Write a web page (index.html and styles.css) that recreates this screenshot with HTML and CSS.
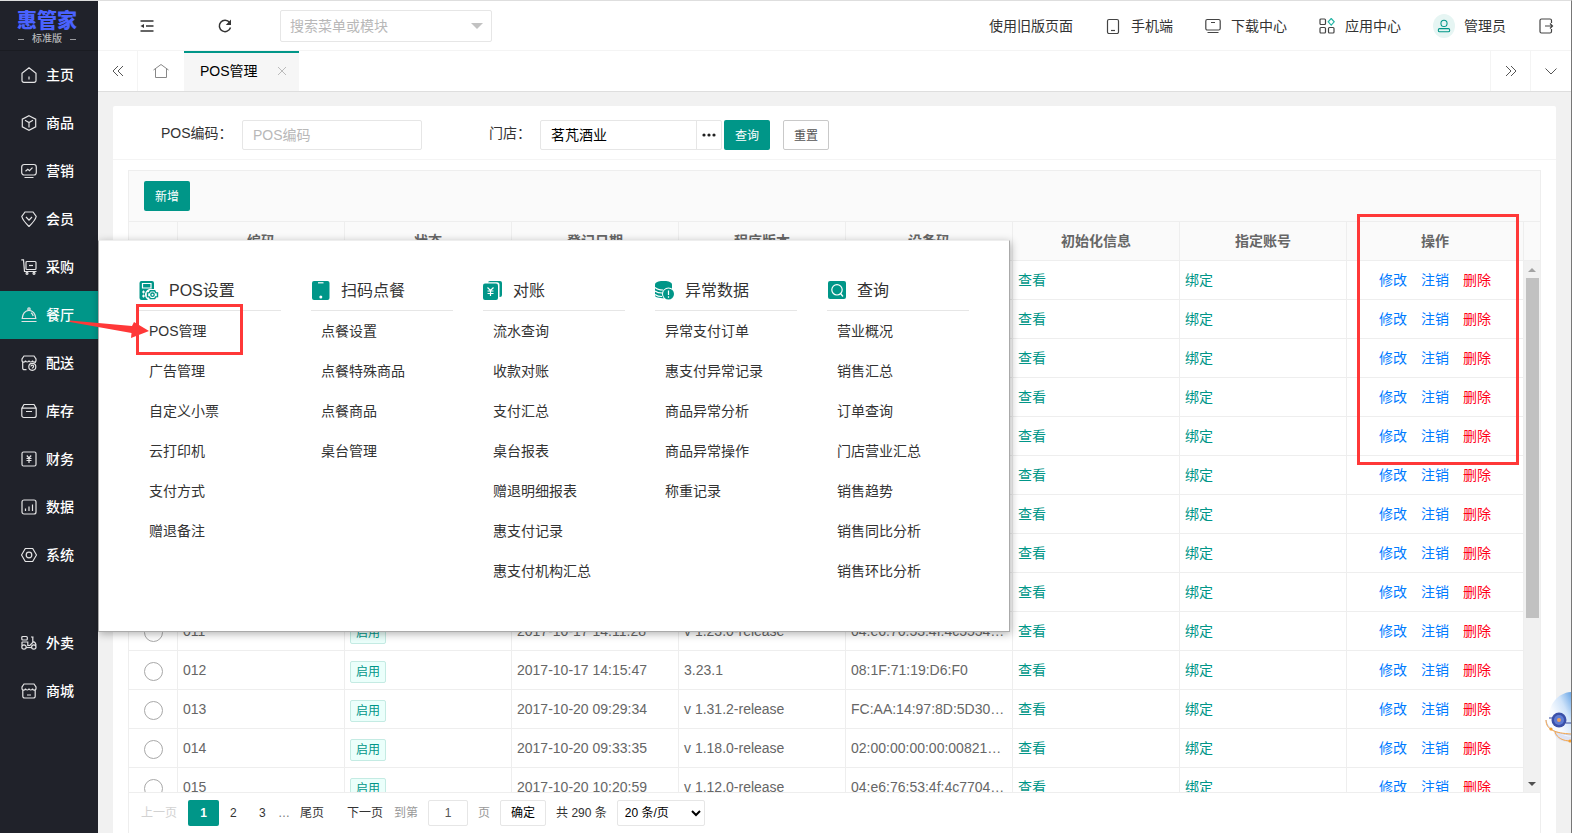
FILE: index.html
```html
<!DOCTYPE html>
<html lang="zh-CN">
<head>
<meta charset="utf-8">
<title>POS管理</title>
<link rel="stylesheet" href="styles.css">
</head>
<body>
<div class="app">
  <aside class="sidebar">
    <div class="logo">
      <div class="logo-name">惠管家</div>
      <div class="logo-edition"><i></i><span>标准版</span><i></i></div>
    </div>
    <nav class="nav">
      <a class="nav-item" href="#"><svg viewBox="0 0 16 16"><path d="M1 6.200 8 .8l7 5.400v7.300a1.800 1.800 0 0 1-1.800 1.800H2.800A1.800 1.800 0 0 1 1 13.500z"/><path d="M8 9.500v3"/></svg>主页</a>
      <a class="nav-item" href="#"><svg viewBox="0 0 16 16"><path d="M8 .7l6.700 3.400v7.800L8 15.300l-6.700-3.400V4.100zM4 5.300l4 2.200 4-2.200M8 7.500v5"/></svg>商品</a>
      <a class="nav-item" href="#"><svg viewBox="0 0 16 16"><rect x=".7" y="1.500" width="14.600" height="10.500" rx="2.500"/><path d="M4.500 8.300l2.300-2 1.700 1.400 3-3M3.500 14.500h9"/></svg>营销</a>
      <a class="nav-item" href="#"><svg viewBox="0 0 16 16"><path d="M4 1h8l3.200 4.500C14.500 9 11 12.500 8 15.500 5 12.500 1.500 9 .8 5.500zM5 6l3 3.200L11 6"/></svg>会员</a>
      <a class="nav-item" href="#"><svg viewBox="0 0 16 16"><path d="M.3.800h2.200l1 11.700h12"/><rect x="5" y="2.500" width="10" height="8" rx="1"/><path d="M8 6.500h4"/><circle cx="6" cy="14.300" r="1"/><circle cx="13" cy="14.300" r="1"/></svg>采购</a>
      <a class="nav-item active" href="#"><svg viewBox="0 0 16 16"><path d="M1.200 11.500C1.500 7 4.200 3.300 8 3.300s6.500 3.700 6.800 8.200zM.5 14.500h15M10 5.800c1.200.8 1.900 1.800 2.200 3.200"/><circle cx="8" cy="2" r="1.200"/></svg>餐厅<svg class="arrow" viewBox="0 0 80 18"><path d="M0 .5 62 6 64 2 79 11 61 18 61.500 13 0 2z"/></svg></a>
      <a class="nav-item" href="#"><svg viewBox="0 0 16 16"><path d="M5.500 14.700H3.200a1.500 1.500 0 0 1-1.500-1.500V7M14.300 7v1M3 1h10l2 3v1.500c0 2.200-3.400 2.200-3.500 0-.2 2-3.300 2-3.500 0-.2 2-3.300 2-3.500 0C4.400 7.700 1 7.700 1 5.500V4z"/><circle cx="11.300" cy="11.800" r="3.500"/><path d="M10 11.500c0-1.800 2.600-1.800 2.600 0 0 1-1.300 1-1.300 2"/></svg>配送</a>
      <a class="nav-item" href="#"><svg viewBox="0 0 16 16"><path d="M.8 5.200 3 1.500h10l2.200 3.700v7.300a2 2 0 0 1-2 2H2.800a2 2 0 0 1-2-2zM.8 5.200h14.400M5 8.500h6"/></svg>库存</a>
      <a class="nav-item" href="#"><svg viewBox="0 0 16 16"><rect x="1" y="1" width="14" height="14" rx="1.500"/><path d="M5.800 4.500 8 7l2.200-2.500M8 7v5M5.500 7.500h5M5.500 9.500h5"/></svg>财务</a>
      <a class="nav-item" href="#"><svg viewBox="0 0 16 16"><rect x="1" y="1" width="14" height="14" rx="2"/><path d="M4.500 9.500V12M8 7.500V12M11.500 5.500V12"/></svg>数据</a>
      <a class="nav-item" href="#"><svg viewBox="0 0 16 16"><path d="M4.300 1.500h7.400L15.500 8l-3.800 6.500H4.300L.5 8z"/><circle cx="8" cy="8" r="2.800"/></svg>系统</a>
      <a class="nav-item extra" href="#"><svg viewBox="0 0 16 16"><rect x=".8" y="1.500" width="5.500" height="3.500" rx="1"/><path d="M.8 7h6v3.500h2l3-3V2.500M10 2h2.500M12 6.500c2 .5 3 2 3 4M1 10.500V7"/><circle cx="3" cy="12" r="2.200"/><circle cx="12.800" cy="12" r="2.200"/><path d="M5.200 12.500h5.400"/></svg>外卖</a>
      <a class="nav-item" href="#"><svg viewBox="0 0 16 16"><path d="M1.800 7v6.200a1.800 1.800 0 0 0 1.800 1.800h8.800a1.800 1.800 0 0 0 1.800-1.800V7M3 1h10l2 3v1.500c0 2.200-3.400 2.200-3.500 0-.2 2-3.300 2-3.500 0-.2 2-3.300 2-3.500 0C4.400 7.700 1 7.700 1 5.500V4zM6 12h4"/></svg>商城</a>
    </nav>
  </aside>

  <div class="main">
    <header class="topbar">
      <button class="icon-btn" type="button" aria-label="收起菜单"><svg viewBox="0 0 16 16"><path d="M1.500 3h13M7 8h7.500M1.500 13h13"/><path class="solid" d="M1.500 8 5 6v4z"/></svg></button>
      <button class="icon-btn" type="button" aria-label="刷新"><svg viewBox="0 0 16 16"><path d="M13.500 9.500A5.700 5.700 0 1 1 12.600 4.500"/><path class="solid" d="M14 1.500V7H8.800z"/></svg></button>
      <div class="search"><input type="text" aria-label="搜索" placeholder="搜索菜单或模块"><i class="caret"></i></div>
      <div class="tools">
        <a href="#">使用旧版页面</a>
        <a href="#"><svg viewBox="0 0 16 16"><rect x="2.500" y="1.500" width="11" height="14" rx="1.500"/><path d="M6 12.500h4"/></svg>手机端</a>
        <a href="#"><svg viewBox="0 0 16 16"><rect x=".8" y="1.500" width="14.400" height="10.500" rx="1.500"/><path d="M6 4.500h4M2.500 14.500h11"/></svg>下载中心</a>
        <a href="#"><svg viewBox="0 0 16 16"><rect x="1" y="1" width="5.500" height="5.500" rx="1"/><rect x="1" y="9.500" width="5.500" height="5.500" rx="1"/><rect x="9.500" y="9.500" width="5.500" height="5.500" rx="1"/><path class="teal" d="M12.200.500l3 3.300-3 3.300-3-3.300z"/></svg>应用中心</a>
        <a class="user" href="#"><span class="avatar"><svg viewBox="0 0 16 16"><circle cx="8" cy="5" r="3.500"/><rect x="1.500" y="11" width="13" height="3.500" rx="1.500"/></svg></span>管理员</a>
        <a href="#" aria-label="退出"><svg viewBox="0 0 16 16"><path d="M13.500 5V2.500A1.500 1.500 0 0 0 12 1H3.500A1.500 1.500 0 0 0 2 2.500v11A1.500 1.500 0 0 0 3.500 15H12a1.500 1.500 0 0 0 1.500-1.500V11M7 8h7M12 5.500 14.500 8 12 10.500"/></svg></a>
      </div>
    </header>

    <div class="tabs">
      <button class="tab-btn" type="button" aria-label="向左"><svg viewBox="0 0 16 16"><path d="M8 3 3 8l5 5M13 3 8 8l5 5"/></svg></button>
      <button class="tab-btn home" type="button" aria-label="首页"><svg viewBox="0 0 16 16"><path d="M.5 7 8 1.500 15.500 7M2.500 6v8.500h11V6"/></svg></button>
      <div class="tab"><span>POS管理</span><button type="button" aria-label="关闭"><svg viewBox="0 0 8 8"><path d="M0 0l8 8M8 0 0 8"/></svg></button></div>
      <button class="tab-btn last" type="button" aria-label="向右"><svg viewBox="0 0 16 16"><path d="M3 3l5 5-5 5M8 3l5 5-5 5"/></svg></button>
      <button class="tab-btn" type="button" aria-label="更多"><svg viewBox="0 0 16 16"><path d="M2.500 5.500 8 11l5.500-5.500"/></svg></button>
    </div>

    <main class="card">
      <form class="filter">
        <label for="code">POS编码：</label>
        <input id="code" class="field" type="text" placeholder="POS编码">
        <label class="second" for="shop">门店：</label>
        <div class="picker"><input id="shop" type="text" value="茗芃酒业"><button type="button" aria-label="选择门店"><svg viewBox="0 0 14 4"><circle cx="2" cy="2" r="1.600"/><circle cx="7" cy="2" r="1.600"/><circle cx="12" cy="2" r="1.600"/></svg></button></div>
        <button class="btn primary" type="button">查询</button>
        <button class="btn plain" type="button">重置</button>
      </form>

      <section class="grid-box">
        <div class="toolbar"><button class="btn primary" type="button">新增</button></div>
        <div class="grid-head">
          <table>
            <colgroup><col class="c-radio"><col><col><col><col><col><col><col><col class="c-op"></colgroup>
            <thead><tr><th></th><th>编码</th><th>状态</th><th>登记日期</th><th>程序版本</th><th>设备码</th><th>初始化信息</th><th>指定账号</th><th class="op-head">操作<span class="mark-box"></span></th></tr></thead>
          </table>
        </div>
        <div class="grid-body">
          <div class="rows">
          <table>
            <colgroup><col class="c-radio"><col><col><col><col><col><col><col><col class="c-op"></colgroup>
            <tbody>
              <tr><td class="pick"><input type="radio" name="row" aria-label="002"></td><td></td><td></td><td></td><td></td><td></td><td><a href="#">查看</a></td><td><a href="#">绑定</a></td><td class="ops"><a href="#">修改</a><a href="#">注销</a><a class="del" href="#">删除</a></td></tr>
              <tr><td class="pick"><input type="radio" name="row" aria-label="003"></td><td></td><td></td><td></td><td></td><td></td><td><a href="#">查看</a></td><td><a href="#">绑定</a></td><td class="ops"><a href="#">修改</a><a href="#">注销</a><a class="del" href="#">删除</a></td></tr>
              <tr><td class="pick"><input type="radio" name="row" aria-label="004"></td><td></td><td></td><td></td><td></td><td></td><td><a href="#">查看</a></td><td><a href="#">绑定</a></td><td class="ops"><a href="#">修改</a><a href="#">注销</a><a class="del" href="#">删除</a></td></tr>
              <tr><td class="pick"><input type="radio" name="row" aria-label="005"></td><td></td><td></td><td></td><td></td><td></td><td><a href="#">查看</a></td><td><a href="#">绑定</a></td><td class="ops"><a href="#">修改</a><a href="#">注销</a><a class="del" href="#">删除</a></td></tr>
              <tr><td class="pick"><input type="radio" name="row" aria-label="006"></td><td></td><td></td><td></td><td></td><td></td><td><a href="#">查看</a></td><td><a href="#">绑定</a></td><td class="ops"><a href="#">修改</a><a href="#">注销</a><a class="del" href="#">删除</a></td></tr>
              <tr><td class="pick"><input type="radio" name="row" aria-label="007"></td><td></td><td></td><td></td><td></td><td></td><td><a href="#">查看</a></td><td><a href="#">绑定</a></td><td class="ops"><a href="#">修改</a><a href="#">注销</a><a class="del" href="#">删除</a></td></tr>
              <tr><td class="pick"><input type="radio" name="row" aria-label="008"></td><td></td><td></td><td></td><td></td><td></td><td><a href="#">查看</a></td><td><a href="#">绑定</a></td><td class="ops"><a href="#">修改</a><a href="#">注销</a><a class="del" href="#">删除</a></td></tr>
              <tr><td class="pick"><input type="radio" name="row" aria-label="009"></td><td></td><td></td><td></td><td></td><td></td><td><a href="#">查看</a></td><td><a href="#">绑定</a></td><td class="ops"><a href="#">修改</a><a href="#">注销</a><a class="del" href="#">删除</a></td></tr>
              <tr><td class="pick"><input type="radio" name="row" aria-label="010"></td><td></td><td></td><td></td><td></td><td></td><td><a href="#">查看</a></td><td><a href="#">绑定</a></td><td class="ops"><a href="#">修改</a><a href="#">注销</a><a class="del" href="#">删除</a></td></tr>
              <tr><td class="pick"><input type="radio" name="row" aria-label="011"></td><td>011</td><td><span class="tag">启用</span></td><td>2017-10-17 14:11:28</td><td>v 1.23.0-release</td><td>04:e6:76:53:4f:4c5554000000</td><td><a href="#">查看</a></td><td><a href="#">绑定</a></td><td class="ops"><a href="#">修改</a><a href="#">注销</a><a class="del" href="#">删除</a></td></tr>
              <tr><td class="pick"><input type="radio" name="row" aria-label="012"></td><td>012</td><td><span class="tag">启用</span></td><td>2017-10-17 14:15:47</td><td>3.23.1</td><td>08:1F:71:19:D6:F0</td><td><a href="#">查看</a></td><td><a href="#">绑定</a></td><td class="ops"><a href="#">修改</a><a href="#">注销</a><a class="del" href="#">删除</a></td></tr>
              <tr><td class="pick"><input type="radio" name="row" aria-label="013"></td><td>013</td><td><span class="tag">启用</span></td><td>2017-10-20 09:29:34</td><td>v 1.31.2-release</td><td>FC:AA:14:97:8D:5D30000000</td><td><a href="#">查看</a></td><td><a href="#">绑定</a></td><td class="ops"><a href="#">修改</a><a href="#">注销</a><a class="del" href="#">删除</a></td></tr>
              <tr><td class="pick"><input type="radio" name="row" aria-label="014"></td><td>014</td><td><span class="tag">启用</span></td><td>2017-10-20 09:33:35</td><td>v 1.18.0-release</td><td>02:00:00:00:00:00821000000</td><td><a href="#">查看</a></td><td><a href="#">绑定</a></td><td class="ops"><a href="#">修改</a><a href="#">注销</a><a class="del" href="#">删除</a></td></tr>
              <tr><td class="pick"><input type="radio" name="row" aria-label="015"></td><td>015</td><td><span class="tag">启用</span></td><td>2017-10-20 10:20:59</td><td>v 1.12.0-release</td><td>04:e6:76:53:4f:4c7704000000</td><td><a href="#">查看</a></td><td><a href="#">绑定</a></td><td class="ops"><a href="#">修改</a><a href="#">注销</a><a class="del" href="#">删除</a></td></tr>
            </tbody>
          </table>
          </div>
          <div class="scrollbar"><i class="up"></i><div class="track"><div class="thumb"></div></div><i class="down"></i></div>
        </div>
        <div class="pager">
          <a class="off" href="#">上一页</a><a class="on" href="#">1</a><a class="num" href="#">2</a><a class="num" href="#">3</a><span class="dots">…</span><a class="end" href="#">尾页</a><a class="next" href="#">下一页</a>
          <label for="page">到第</label><input id="page" type="text" value="1"><span class="unit">页</span><button type="button">确定</button><span class="total">共 290 条</span>
          <select aria-label="每页条数"><option>20 条/页</option></select>
        </div>
      </section>
    </main>
  </div>

  <div class="mega">
    <section>
      <h2><svg viewBox="0 0 20 20"><path d="M2.500 0h10.500a2 2 0 0 1 2 2v6.500A5 5 0 0 0 9 19H2.500a2 2 0 0 1-2-2V2a2 2 0 0 1 2-2z"/><path class="w" d="M3.500 2.500h8.500v4.500H3.500zM3 11h3M7.500 11h2M3 15h3M4.500 9.500v3M4.500 13.500v3"/><path class="wf" d="M10 8h7l3 5.700-3 5.800h-7l-3-5.800z"/><path class="g" d="M11.300 9.800h4.400l1 1.800 1.800.2v3.800l-1.800.2-1 1.800h-4.400l-1-1.800-1.800-.2v-3.800l1.800-.2z"/><circle class="g" cx="13.500" cy="13.700" r="1.700"/></svg>POS设置</h2>
      <a class="marked" href="#">POS管理<span class="mark-box"></span></a><a href="#">广告管理</a><a href="#">自定义小票</a><a href="#">云打印机</a><a href="#">支付方式</a><a href="#">赠退备注</a>
    </section>
    <section>
      <h2><svg viewBox="0 0 20 20"><rect x="1" y="0" width="17.500" height="19" rx="2"/><path class="w" d="M7 1.800h5.500"/><circle class="wf" cx="9.800" cy="16" r="1.500"/></svg>扫码点餐</h2>
      <a href="#">点餐设置</a><a href="#">点餐特殊商品</a><a href="#">点餐商品</a><a href="#">桌台管理</a>
    </section>
    <section>
      <h2><svg viewBox="0 0 20 20"><rect x="5" y="0" width="14" height="16" rx="2"/><path class="wf" d="M0 1.300h14a2.500 2.500 0 0 1 2.500 2.500V18H0z"/><rect x="0" y="2.500" width="15" height="16.500" rx="2"/><path class="w" d="M4.500 6.500l3 3 3-3M7.500 9.500V15M4.500 10h6M4.500 12.500h6"/></svg>对账</h2>
      <a href="#">流水查询</a><a href="#">收款对账</a><a href="#">支付汇总</a><a href="#">桌台报表</a><a href="#">赠退明细报表</a><a href="#">惠支付记录</a><a href="#">惠支付机构汇总</a>
    </section>
    <section>
      <h2><svg viewBox="0 0 20 20"><path d="M0 3.500C0-1.200 17-1.200 17 3.500V15c0 3-17 3-17-.5z"/><path class="w" d="M0 6.500c2 2 5 2.500 8 2.500M0 10c2 1.500 4 2 7 2M0 13.500c2 1.500 4 2 7 2"/><circle class="wf" cx="13.500" cy="13" r="6.500"/><circle cx="13.500" cy="13" r="5.500"/><path class="w" d="M13.500 9.500V14M13.500 15.200v1.500"/></svg>异常数据</h2>
      <a href="#">异常支付订单</a><a href="#">惠支付异常记录</a><a href="#">商品异常分析</a><a href="#">商品异常操作</a><a href="#">称重记录</a>
    </section>
    <section>
      <h2><svg viewBox="0 0 20 20"><rect x="1" y="0" width="18" height="18" rx="2"/><circle class="w" cx="10" cy="8.800" r="5.200"/><path class="w" d="M13.500 12.500 16 15.500"/></svg>查询</h2>
      <a href="#">营业概况</a><a href="#">销售汇总</a><a href="#">订单查询</a><a href="#">门店营业汇总</a><a href="#">销售趋势</a><a href="#">销售同比分析</a><a href="#">销售环比分析</a>
    </section>
  </div>

  <svg class="robot" viewBox="0 0 26 54">
    <defs><linearGradient id="shell" x1=".2" y1=".8" x2="1" y2="0"><stop offset=".2" stop-color="#f8fbff"/><stop offset=".6" stop-color="#cfe3f9"/><stop offset="1" stop-color="#6aa6e6"/></linearGradient></defs>
    <path fill="#dfe3f2" d="M9 40c0 8 8 11 17 11V40z"/>
    <path fill="url(#shell)" d="M26 1C12 2 4 14 4 26c0 9 5 17 22 20z"/>
    <path fill="none" stroke="#c5cbe4" d="M1 29c1 8 9 14 25 15"/>
    <path fill="none" stroke="#f5a54a" d="M1 29c0 10 9 13 25 14M10 41c2 6 8 9 16 9"/>
    <path stroke="#34479c" d="M21 32h5M4 27h4"/>
    <circle cx="14" cy="29" r="7.500" fill="#3b50a8"/><circle cx="14" cy="29" r="5" fill="#5f7cd3"/><circle cx="14" cy="29" r="2" fill="#f0a060"/>
    <circle cx="6" cy="38" r="1.600" fill="#f5a030"/><circle cx="25" cy="50" r="1.600" fill="#f5a030"/>
  </svg>
</div>
</body>
</html>
```

FILE: styles.css
```css
* { box-sizing: border-box; }
body {
  margin: 0;
  color: #333;
  font: 14px/20px "Liberation Sans", "Noto Sans CJK SC", sans-serif;
}
a { color: inherit; text-decoration: none; }
button, input, select { font: inherit; color: inherit; }
button { padding: 0; border: 0; background: none; }
svg { display: block; flex: none; width: 16px; height: 16px; fill: none; stroke: currentColor; }
input::placeholder { color: #b8b8b8; opacity: 1; }

.app {
  position: relative;
  display: flex;
  height: 100vh;
  overflow: hidden;
  border-top: 1px solid #dedede;
  border-right: 1px solid #777;
}

/* Sidebar */
.sidebar { flex: none; width: 98px; background: #20222a; color: #fff; }
.logo {
  height: 50px;
  padding-top: 9px;
  border-bottom: 1px solid #1a1c22;
  text-align: center;
}
.logo-name { padding-right: 4px; color: #4a62ff; font-size: 20px; font-weight: 900; line-height: 22px; }
.logo-edition {
  display: flex;
  align-items: center;
  justify-content: center;
  gap: 8px;
  padding-right: 4px;
  color: #b4b5b8;
  font-size: 10px;
  font-weight: 500;
  line-height: 14px;
}
.logo-edition i { width: 6px; height: 1px; background: #9a9b9f; }
.nav-item {
  position: relative;
  display: flex;
  align-items: center;
  gap: 9px;
  height: 48px;
  padding-left: 21px;
  font-weight: 500;
}
.nav-item svg { color: #e4e4e5; stroke-width: 1.200; }
.nav-item.active { background: #009688; }
.nav-item.extra { margin-top: 40px; }
.nav-item .arrow {
  position: absolute;
  z-index: 30;
  left: 70px;
  top: 29px;
  width: 80px;
  height: 18px;
  fill: #ff3838;
  stroke: none;
}

/* Header */
.main { display: flex; flex: 1; flex-direction: column; min-width: 0; background: #f1f1f1; }
.topbar {
  display: flex;
  flex: none;
  align-items: center;
  height: 50px;
  padding: 0 17px 0 10px;
  border-bottom: 1px solid #f4f4f4;
  background: #fff;
}
.icon-btn { display: grid; place-items: center; width: 78px; height: 48px; }
.icon-btn svg { stroke-width: 1.500; }
.icon-btn .solid { fill: currentColor; stroke: none; }
.search { position: relative; width: 212px; margin-left: 16px; }
.search input { width: 100%; height: 32px; padding: 0 28px 0 9px; border: 1px solid #e6e6e6; border-radius: 2px; }
.caret { position: absolute; right: 9px; top: 13px; border: 6px solid transparent; border-top-color: #c2c2c2; }
.tools { display: flex; gap: 32px; margin-left: auto; }
.tools a { display: flex; align-items: center; gap: 10px; }
.tools svg { color: #444; stroke-width: 1.200; }
.tools svg .teal { stroke: #26b5a6; }
.tools .user { gap: 9px; }
.avatar { display: grid; place-items: center; width: 22px; height: 24px; border-radius: 50%; background: #e6f5f3; }
.tools .avatar svg { width: 14px; height: 14px; color: #009688; }

/* Tabs */
.tabs { display: flex; flex: none; height: 41px; border-bottom: 1px solid #dedede; background: #fff; }
.tab-btn { display: grid; place-items: center; width: 40px; border-right: 1px solid #f4f4f4; color: #555; }
.tab-btn:last-child { border-right: 0; }
.tab-btn.home { width: 46px; border-right: 0; color: #888; }
.tab-btn.last { width: 41px; margin-left: auto; border-left: 1px solid #f4f4f4; }
.tab {
  display: flex;
  align-items: center;
  gap: 20px;
  padding: 0 13px 2px 16px;
  border-top: 2px solid #009688;
  background: #f6f6f6;
  color: #000;
}
.tab svg { width: 8px; height: 8px; color: #bbb; }

/* Content card */
.card {
  display: flex;
  flex: 1;
  flex-direction: column;
  min-height: 0;
  margin: 14px 15px 0;
  border-radius: 2px 2px 0 0;
  background: #fff;
}
.filter { display: flex; flex: none; align-items: center; height: 54px; padding: 5px 0 0 48px; border-bottom: 1px solid #f4f4f4; }
.filter label { width: 81px; padding-bottom: 4px; }
.filter .second { width: 51px; margin-left: 67px; }
.field, .picker { height: 30px; border: 1px solid #e6e6e6; border-radius: 2px; background: #fff; }
.field { width: 180px; padding: 0 10px; }
.picker { display: flex; width: 182px; margin-right: 2px; color: #000; }
.picker input { flex: 1; min-width: 0; padding: 0 10px; border: 0; border-right: 1px solid #e6e6e6; background: none; }
.picker button { display: grid; place-items: center; width: 24px; }
.picker svg { width: 14px; height: 4px; fill: #222; stroke: none; }
.btn { height: 30px; padding: 2px 11px 0; border-radius: 2px; font-size: 12px; }
.btn.primary { background: #009688; color: #fff; }
.btn.plain { margin-left: 13px; padding: 2px 10px 0; border: 1px solid #c9c9c9; color: #555; }

.grid-box {
  display: flex;
  flex: 1;
  flex-direction: column;
  min-height: 0;
  margin: 10px 15px 0;
  border: 1px solid #eee;
  border-bottom: 0;
}
.toolbar { flex: none; padding: 10px 15px; border-bottom: 1px solid #eee; background: #fafafa; }
.toolbar .btn { display: block; }
.grid-head { flex: none; padding-right: 16px; background: #fafafa; border-bottom: 1px solid #eee; }
table { width: 100%; border-spacing: 0; table-layout: fixed; color: #666; }
.c-radio { width: 49px; }
.c-op { width: 177px; }
th, td { height: 39px; padding: 0 5px; border-right: 1px solid #eee; }
th { height: 38px; font-weight: 700; }
td {
  overflow: hidden;
  border-bottom: 1px solid #eee;
  text-overflow: ellipsis;
  white-space: nowrap;
}
td a { color: #009688; }
.pick { padding: 2px 0 0; text-align: center; }
.pick input {
  display: block;
  width: 19px;
  height: 19px;
  margin: 0 auto;
  border: 1px solid #a8a8a8;
  border-radius: 50%;
  appearance: none;
}
.tag {
  display: inline-block;
  height: 22px;
  margin-top: 4px;
  padding: 0 5px;
  border: 1px solid #c4ebe3;
  border-radius: 2px;
  background: #ebfffb;
  color: #009688;
  font-size: 12px;
  line-height: 20px;
  vertical-align: middle;
}
.ops { text-align: center; }
.ops a { margin: 0 7px; color: #007bff; }
.ops .del { color: #ff0018; }
.op-head { position: relative; }
.mark-box { position: absolute; z-index: 20; border: 3px solid #ff3838; }
.op-head .mark-box { top: -8px; right: 4px; left: 10px; height: 251px; }

.grid-body { display: flex; flex: 1; min-height: 0; overflow: hidden; }
.rows { flex: 1; min-width: 0; }
.scrollbar { display: flex; flex: none; flex-direction: column; align-items: center; width: 16px; background: #f1f1f1; }
.scrollbar i { flex: none; width: 8px; height: 17px; }
.scrollbar .up { background: #a3a3a3; clip-path: polygon(0 11px, 4px 7px, 8px 11px); }
.scrollbar .down { background: #505050; clip-path: polygon(0 7px, 8px 7px, 4px 11px); }
.track { flex: 1; width: 13px; }
.thumb { height: 68.5%; background: #c1c1c1; }

.pager {
  display: flex;
  flex: none;
  align-items: center;
  height: 41px;
  padding-left: 12px;
  border-top: 1px solid #eee;
  font-size: 12px;
}
.pager .off { color: #d2d2d2; }
.pager .on { width: 31px; margin: 0 11px; border-radius: 2px; background: #009688; color: #fff; font-weight: 700; line-height: 26px; text-align: center; }
.pager .num { width: 29px; }
.pager .dots { width: 12px; margin-left: -10px; margin-right: 10px; color: #777; }
.pager .end { margin-right: 23px; }
.pager .next { margin-right: 11px; }
.pager label, .pager .unit { color: #999; }
.pager input, .pager button, .pager select { height: 26px; border: 1px solid #e6e6e6; border-radius: 2px; background: #fff; }
.pager input { width: 40px; margin: 0 10px; text-align: center; color: #555; }
.pager button { width: 46px; margin: 0 10px; color: #000; }
.pager select { width: 88px; margin-left: 10px; padding-left: 3px; color: #000; }

/* Flyout menu */
.mega {
  position: absolute;
  z-index: 10;
  top: 239px;
  left: 98px;
  display: flex;
  gap: 30px;
  height: 392px;
  padding: 38px 40px 0;
  border: 1px solid #aaa;
  border-top-color: #eee;
  background: #fff;
  box-shadow: 1px 2px 8px rgba(0, 0, 0, .3);
}
.mega section { width: 142px; }
.mega h2 {
  display: flex;
  align-items: center;
  gap: 10px;
  height: 32px;
  margin: 0;
  padding-bottom: 8px;
  border-bottom: 1px solid #e6e6e6;
  font-size: 16px;
  font-weight: 400;
}
.mega h2 svg { width: 20px; height: 20px; fill: #009688; stroke: none; }
.mega h2 .w { fill: none; stroke: #fff; stroke-width: 1.200; }
.mega h2 .wf { fill: #fff; }
.mega h2 .g { fill: none; stroke: #009688; stroke-width: 1.400; }
.mega a { position: relative; display: block; padding-left: 10px; line-height: 40px; }
.marked .mark-box { top: -7px; left: -3px; width: 107px; height: 51px; }

.robot { position: absolute; z-index: 20; right: 0; bottom: 88px; width: 26px; height: 54px; stroke: none; }
```
